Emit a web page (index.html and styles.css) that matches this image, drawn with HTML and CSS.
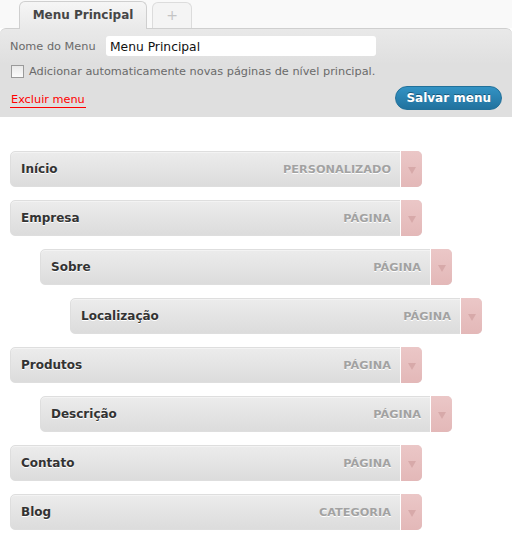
FILE: index.html
```html
<!DOCTYPE html>
<html lang="pt-BR">
<head>
    <meta charset="UTF-8">
    <meta name="viewport" content="width=device-width, initial-scale=1.0">
    <title>Menus</title>
    <link rel="stylesheet" href="styles.css">
</head>
<body>

<div class="tabs">
    <div class="tab tab-active">Menu Principal</div>
    <div class="tab tab-add">+</div>
</div>

<div class="menu-panel">
    <div class="name-row">
        <label for="menu-name">Nome do Menu</label>
        <input type="text" id="menu-name" value="Menu Principal">
    </div>
    <label class="auto-add">
        <input type="checkbox">
        <span>Adicionar automaticamente novas páginas de nível principal.</span>
    </label>
    <div class="actions">
        <a href="#" class="delete-link">Excluir menu</a>
        <button type="button" class="save-button">Salvar menu</button>
    </div>
</div>

<ul class="menu-items">
    <li class="menu-item depth-0"><span class="item-title">Início</span><span class="item-type">PERSONALIZADO</span><span class="item-toggle"></span></li>
    <li class="menu-item depth-0"><span class="item-title">Empresa</span><span class="item-type">PÁGINA</span><span class="item-toggle"></span></li>
    <li class="menu-item depth-1"><span class="item-title">Sobre</span><span class="item-type">PÁGINA</span><span class="item-toggle"></span></li>
    <li class="menu-item depth-2"><span class="item-title">Localização</span><span class="item-type">PÁGINA</span><span class="item-toggle"></span></li>
    <li class="menu-item depth-0"><span class="item-title">Produtos</span><span class="item-type">PÁGINA</span><span class="item-toggle"></span></li>
    <li class="menu-item depth-1"><span class="item-title">Descrição</span><span class="item-type">PÁGINA</span><span class="item-toggle"></span></li>
    <li class="menu-item depth-0"><span class="item-title">Contato</span><span class="item-type">PÁGINA</span><span class="item-toggle"></span></li>
    <li class="menu-item depth-0"><span class="item-title">Blog</span><span class="item-type">CATEGORIA</span><span class="item-toggle"></span></li>
</ul>

</body>
</html>
```

FILE: styles.css
```css
body {
    margin: 0;
    font-family: "DejaVu Sans", Verdana, sans-serif;
    font-size: 11.3px;
    color: #333;
    background: #fff;
}

/* Tabs above the panel */
.tabs {
    display: flex;
    align-items: flex-end;
    gap: 5px;
    height: 28px;
    padding-left: 19px;
    background: #f9f9f9;
}
.tab {
    box-sizing: border-box;
    border: 1px solid #dcdcdc;
    border-bottom: none;
    border-radius: 6px 6px 0 0;
    text-align: center;
    margin-bottom: -1px;
    position: relative;
}
.tab-active {
    width: 128px;
    height: 28px;
    padding-top: 6px;
    font-size: 12px;
    font-weight: bold;
    color: #464646;
    background: linear-gradient(#f6f6f6, #e9e9e9);
    border-color: #cfcfcf;
    z-index: 1;
}
.tab-add {
    width: 40px;
    height: 26px;
    padding-top: 4px;
    font-size: 14px;
    color: #c4c4c4;
    background: #f4f4f4;
    margin-bottom: 0;
}

/* Gray panel with the menu name */
.menu-panel {
    background: linear-gradient(#e9e9e9, #dfdfdf 40%);
    border-top: 1px solid #cfcfcf;
    border-radius: 6px 6px 0 0;
    padding: 7px 10px;
    height: 74px;
}
.name-row {
    display: flex;
    align-items: center;
    height: 20px;
}
.name-row label {
    color: #6a6a6a;
    width: 96px;
}
.name-row input {
    box-sizing: border-box;
    width: 270px;
    height: 20px;
    border: none;
    border-radius: 3px;
    padding: 1px 4px 0;
    font-family: "DejaVu Sans", Verdana, sans-serif;
    font-size: 12.3px;
    color: #111;
    background: #fff;
}
.auto-add {
    display: flex;
    align-items: center;
    gap: 5px;
    margin-top: 9px;
    color: #6a6a6a;
}
.auto-add input {
    appearance: none;
    -webkit-appearance: none;
    width: 13px;
    height: 13px;
    margin: 0 0 0 1px;
    border: 1px solid #9a9a9a;
    background: linear-gradient(#e9e9e9, #fbfbfb);
}
.actions {
    display: flex;
    justify-content: space-between;
    align-items: center;
    margin-top: 6px;
}
.delete-link {
    color: #f00;
    text-decoration: none;
    border-bottom: 1px solid #f00;
    padding: 3px 1px 1px;
    margin-top: 3px;
}
.save-button {
    height: 24px;
    padding: 0 10px;
    margin-top: 2px;
    border: 1px solid #22719a;
    border-radius: 12px;
    background: linear-gradient(#3393c4, #21729e);
    color: #fff;
    font-family: "DejaVu Sans", Verdana, sans-serif;
    font-size: 12px;
    font-weight: bold;
    text-shadow: 0 -1px 0 #1a5a7c;
}

/* Menu structure */
.menu-items {
    list-style: none;
    margin: 34px 0 0;
    padding: 0;
}
.menu-item {
    box-sizing: border-box;
    display: flex;
    align-items: center;
    width: 412px;
    height: 36px;
    margin-bottom: 13px;
    margin-left: 10px;
    border: 1px solid #dedede;
    border-radius: 5px;
    background: linear-gradient(#ececec, #dcdcdc);
    box-shadow: inset 0 1px 0 #f3f3f3;
}
.menu-item.depth-1 {
    margin-left: 40px;
}
.menu-item.depth-2 {
    margin-left: 70px;
}
.item-title {
    flex: 1;
    padding-left: 10px;
    font-size: 12px;
    font-weight: bold;
    color: #333;
    text-shadow: 0 1px 0 #fff;
}
.item-type {
    padding-right: 9px;
    font-size: 11.3px;
    font-weight: bold;
    color: #a2a2a2;
    text-shadow: 0 1px 0 #fff;
}
.item-toggle {
    align-self: stretch;
    width: 21px;
    margin: -1px -1px -1px 0;
    border-left: 1px solid #fff;
    border-radius: 0 5px 5px 0;
    background: linear-gradient(#ebc7c7, #e3b8b8);
    display: flex;
    align-items: center;
    justify-content: center;
}
.item-toggle::after {
    content: "";
    margin-top: 3px;
    border-left: 4px solid transparent;
    border-right: 4px solid transparent;
    border-top: 7px solid #d7a9a9;
}
```
